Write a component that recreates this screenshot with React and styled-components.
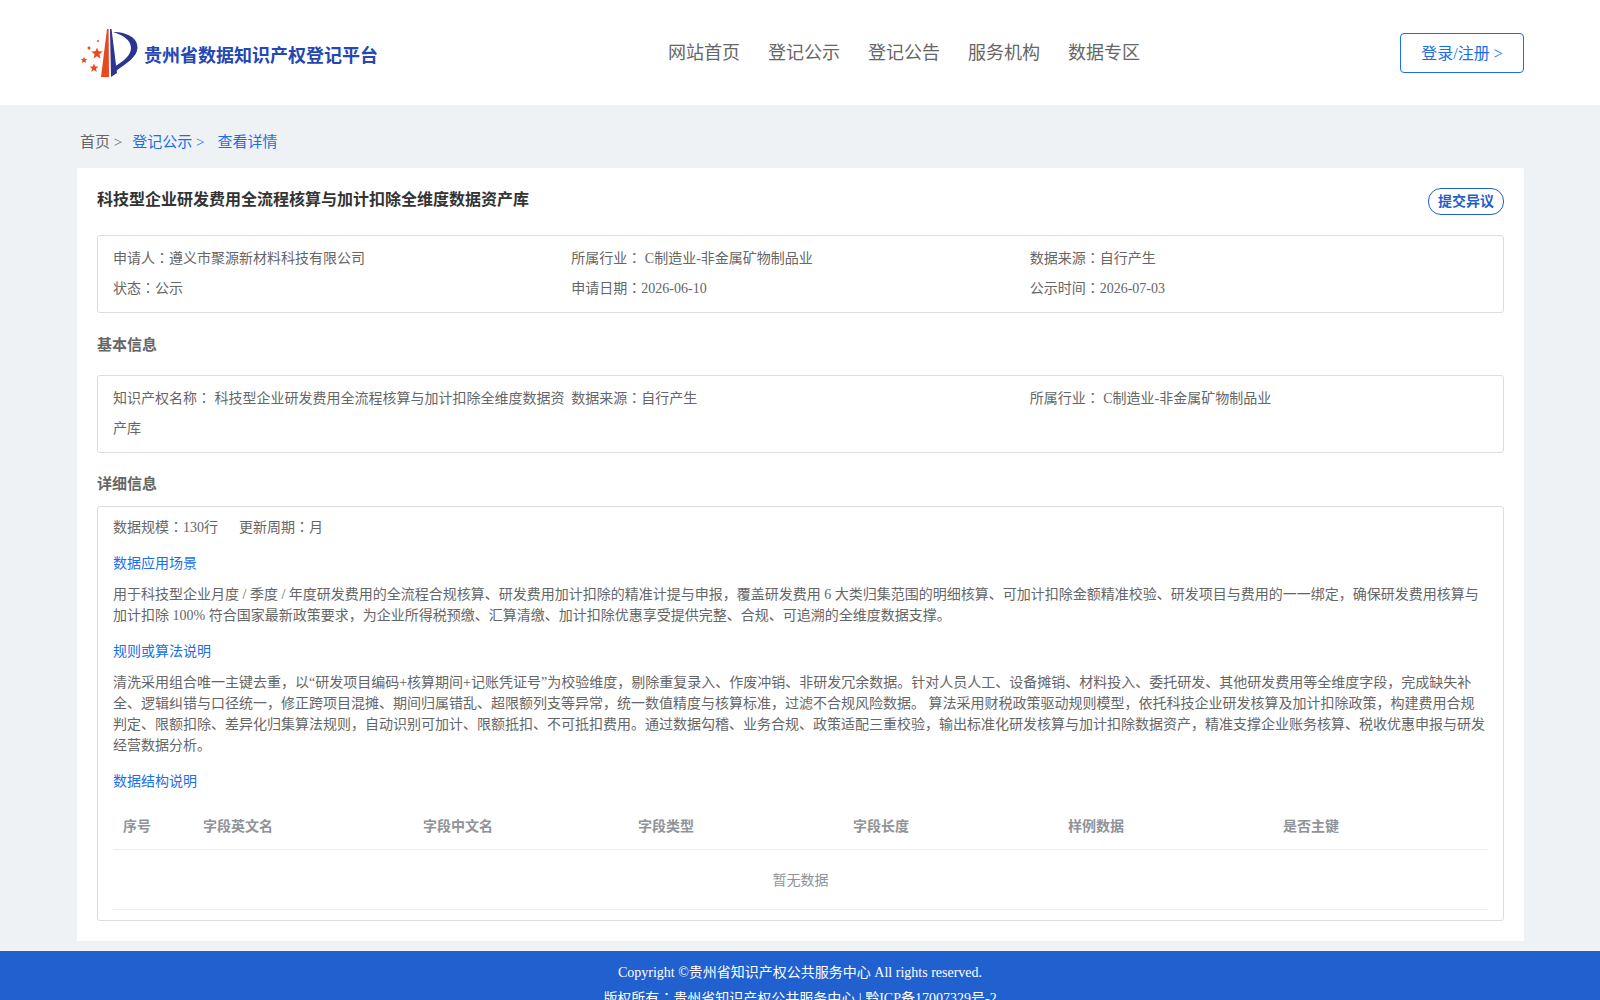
import styled, { createGlobalStyle } from "styled-components";

const GlobalStyle = createGlobalStyle`
  body {
    margin: 0;
    background: #eff2f5;
    color: #666;
    font-family: "Liberation Serif", "Noto Sans CJK SC", serif;
  }
`;

const Header = styled.header`
  height: 105px;
  background: #fff;
  padding: 0 76px 0 81px;
  box-sizing: border-box;
  display: grid;
  grid-template-columns: 586px 1fr auto;
`;

const Brand = styled.div`
  display: flex;
  align-items: center;
  gap: 5px;
  padding-top: 1px;
`;

const BrandName = styled.span`
  font-size: 18px;
  font-weight: 700;
  color: #2447b4;
  padding-top: 1px;
`;

const Nav = styled.nav`
  display: flex;
  gap: 28px;
  padding: 40px 0 0 1px;
`;

const NavLink = styled.a`
  font-size: 18px;
  line-height: 26px;
  height: 26px;
  color: #666;
`;

const LoginButton = styled.a`
  margin-top: 33px;
  width: 124px;
  height: 40px;
  box-sizing: border-box;
  border: 1px solid #1a6fe8;
  border-radius: 4px;
  color: #1a6fe8;
  font-size: 16px;
  padding-bottom: 2px;
  display: flex;
  align-items: center;
  justify-content: center;
`;

const Main = styled.main`
  padding: 0 76px 10px 77px;
`;

const Breadcrumb = styled.div`
  height: 63px;
  display: flex;
  align-items: center;
  padding: 7px 0 0 3px;
  box-sizing: border-box;
  font-size: 15px;
`;

const Crumb = styled.span`
  color: ${(p) => (p.$active ? "#1a6fe8" : "#666")};
  margin-right: ${(p) => p.$gap}px;
`;

const Card = styled.section`
  background: #fff;
  padding: 20px;
  height: 773px;
  box-sizing: border-box;
`;

const TitleRow = styled.div`
  display: flex;
  justify-content: space-between;
  align-items: flex-start;
  height: 47px;
`;

const Title = styled.h1`
  margin: 0;
  font-size: 16px;
  line-height: 24px;
  font-weight: 700;
  color: #333;
`;

const ObjectionButton = styled.a`
  width: 76px;
  height: 27px;
  box-sizing: border-box;
  border: 1px solid #1f5fcb;
  border-radius: 13px;
  color: #1f5fcb;
  font-size: 14px;
  font-weight: 700;
  padding-bottom: 3px;
  display: flex;
  align-items: center;
  justify-content: center;
`;

const InfoBox = styled.div`
  border: 1px solid #ddd;
  border-radius: 3px;
  padding: 8px 15px;
  display: grid;
  grid-template-columns: repeat(3, 1fr);
  font-size: 14px;
  line-height: 30px;
`;

const InfoCell = styled.div`
  min-width: 0;
  padding-right: 6px;
`;

// full-width colon sits centred in the reference, the SC cut puts it low left
const Colon = styled.span`
  font-family: "Noto Sans CJK TC", sans-serif;
  line-height: 0;
`;

const SectionTitle = styled.h2`
  margin: 0;
  font-size: 15px;
  font-weight: 700;
  color: #666;
  height: ${(p) => p.$height}px;
  box-sizing: border-box;
  padding: ${(p) => p.$pad};
  display: flex;
  align-items: center;
`;

const DetailBox = styled.div`
  border: 1px solid #ddd;
  border-radius: 3px;
  padding: 10px 15px;
  font-size: 14px;
  height: 415px;
  box-sizing: border-box;
`;

const MetaRow = styled.div`
  display: flex;
  gap: 21px;
  line-height: 21px;
`;

const SubTitle = styled.div`
  color: #1a6fe8;
  line-height: 21px;
  margin-top: ${(p) => p.$top}px;
`;

const Paragraph = styled.p`
  margin: 10px 0 0;
  line-height: 21px;
`;

const Table = styled.div`
  margin-top: 9px;
`;

const TableHead = styled.div`
  display: grid;
  grid-template-columns: 80px 220px repeat(5, 215px);
  height: 49px;
  box-sizing: border-box;
  padding-bottom: 1px;
  align-items: center;
  border-bottom: 1px solid #ebeef5;
  font-weight: 700;
  color: #909399;
`;

const HeadCell = styled.div`
  padding-left: 10px;
`;

const EmptyRow = styled.div`
  height: 60px;
  box-sizing: border-box;
  padding-bottom: 2px;
  display: flex;
  align-items: center;
  justify-content: center;
  border-bottom: 1px solid #ebeef5;
  color: #909399;
`;

const Footer = styled.footer`
  background: #2160cf;
  color: #fff;
  text-align: center;
  font-size: 14px;
  line-height: 26px;
  padding: 9px 0;
`;

function Logo() {
  return (
    <svg width="58" height="50" viewBox="81 28 58 50" aria-hidden="true">
      <path d="M107 29 L108.6 29 L109 77 L101 77 Z" fill="#e8491d" />
      <path d="M110 29 L111.5 29 L117 73 L111 77 Z" fill="#2b3590" />
      <path
        d="M113 32 C127 32 138 38 137.5 48 C137 57 127 63 116 71 L115.5 66 C124 61 131 55 131 48 C131 40 123 35 113 32 Z"
        fill="#2b3590"
      />
      <g fill="#e8491d">
        <polygon points="97,47.5 98.5,51.3 102.7,51.6 99.4,54.3 100.5,58.4 97,56.2 93.5,58.4 94.6,54.3 91.3,51.6 95.5,51.3" />
        <polygon points="84,56.5 84.9,58.9 87.4,59 85.5,60.6 86.1,63 84,61.7 81.9,63 82.5,60.6 80.6,59 83.1,58.9" />
        <polygon points="94,63.5 95.2,66.6 98.4,66.7 95.9,68.8 96.7,71.9 94,70.1 91.3,71.9 92.1,68.8 89.6,66.7 92.8,66.6" />
        <circle cx="89" cy="48" r="1.5" />
        <circle cx="98" cy="41" r="1" />
      </g>
    </svg>
  );
}

const tableColumns = ["序号", "字段英文名", "字段中文名", "字段类型", "字段长度", "样例数据", "是否主键"];

export default function App() {
  return (
    <>
      <GlobalStyle />
      <Header>
        <Brand>
          <Logo />
          <BrandName>贵州省数据知识产权登记平台</BrandName>
        </Brand>
        <Nav>
          <NavLink>网站首页</NavLink>
          <NavLink>登记公示</NavLink>
          <NavLink>登记公告</NavLink>
          <NavLink>服务机构</NavLink>
          <NavLink>数据专区</NavLink>
        </Nav>
        <LoginButton>登录/注册 &gt;</LoginButton>
      </Header>
      <Main>
        <Breadcrumb>
          <Crumb $gap={10}>首页 &gt;</Crumb>
          <Crumb $active $gap={13}>登记公示 &gt;</Crumb>
          <Crumb $active $gap={0}>查看详情</Crumb>
        </Breadcrumb>
        <Card>
          <TitleRow>
            <Title>科技型企业研发费用全流程核算与加计扣除全维度数据资产库</Title>
            <ObjectionButton>提交异议</ObjectionButton>
          </TitleRow>
          <InfoBox>
            <InfoCell>申请人<Colon>：</Colon>遵义市聚源新材料科技有限公司</InfoCell>
            <InfoCell>所属行业<Colon>：</Colon> C制造业-非金属矿物制品业</InfoCell>
            <InfoCell>数据来源<Colon>：</Colon>自行产生</InfoCell>
            <InfoCell>状态<Colon>：</Colon>公示</InfoCell>
            <InfoCell>申请日期<Colon>：</Colon>2026-06-10</InfoCell>
            <InfoCell>公示时间<Colon>：</Colon>2026-07-03</InfoCell>
          </InfoBox>
          <SectionTitle $height={62} $pad="0 0 2px">基本信息</SectionTitle>
          <InfoBox>
            <InfoCell>知识产权名称<Colon>：</Colon> 科技型企业研发费用全流程核算与加计扣除全维度数据资产库</InfoCell>
            <InfoCell>数据来源<Colon>：</Colon>自行产生</InfoCell>
            <InfoCell>所属行业<Colon>：</Colon> C制造业-非金属矿物制品业</InfoCell>
          </InfoBox>
          <SectionTitle $height={53} $pad="5px 0 0">详细信息</SectionTitle>
          <DetailBox>
            <MetaRow>
              <span>数据规模<Colon>：</Colon>130行</span>
              <span>更新周期<Colon>：</Colon>月</span>
            </MetaRow>
            <SubTitle $top={15}>数据应用场景</SubTitle>
            <Paragraph>
              用于科技型企业月度 / 季度 / 年度研发费用的全流程合规核算、研发费用加计扣除的精准计提与申报，覆盖研发费用 6 大类归集范围的明细核算、可加计扣除金额精准校验、研发项目与费用的一一绑定，确保研发费用核算与加计扣除 100% 符合国家最新政策要求，为企业所得税预缴、汇算清缴、加计扣除优惠享受提供完整、合规、可追溯的全维度数据支撑。
            </Paragraph>
            <SubTitle $top={15}>规则或算法说明</SubTitle>
            <Paragraph>
              清洗采用组合唯一主键去重，以“研发项目编码+核算期间+记账凭证号”为校验维度，剔除重复录入、作废冲销、非研发冗余数据。针对人员人工、设备摊销、材料投入、委托研发、其他研发费用等全维度字段，完成缺失补全、逻辑纠错与口径统一，修正跨项目混摊、期间归属错乱、超限额列支等异常，统一数值精度与核算标准，过滤不合规风险数据。 算法采用财税政策驱动规则模型，依托科技企业研发核算及加计扣除政策，构建费用合规判定、限额扣除、差异化归集算法规则，自动识别可加计、限额抵扣、不可抵扣费用。通过数据勾稽、业务合规、政策适配三重校验，输出标准化研发核算与加计扣除数据资产，精准支撑企业账务核算、税收优惠申报与研发经营数据分析。
            </Paragraph>
            <SubTitle $top={15}>数据结构说明</SubTitle>
            <Table>
              <TableHead>
                {tableColumns.map((name) => (
                  <HeadCell key={name}>{name}</HeadCell>
                ))}
              </TableHead>
              <EmptyRow>暂无数据</EmptyRow>
            </Table>
          </DetailBox>
        </Card>
      </Main>
      <Footer>
        <div>Copyright ©贵州省知识产权公共服务中心 All rights reserved.</div>
        <div>版权所有<Colon>：</Colon>贵州省知识产权公共服务中心 | 黔ICP备17007329号-2</div>
      </Footer>
    </>
  );
}
